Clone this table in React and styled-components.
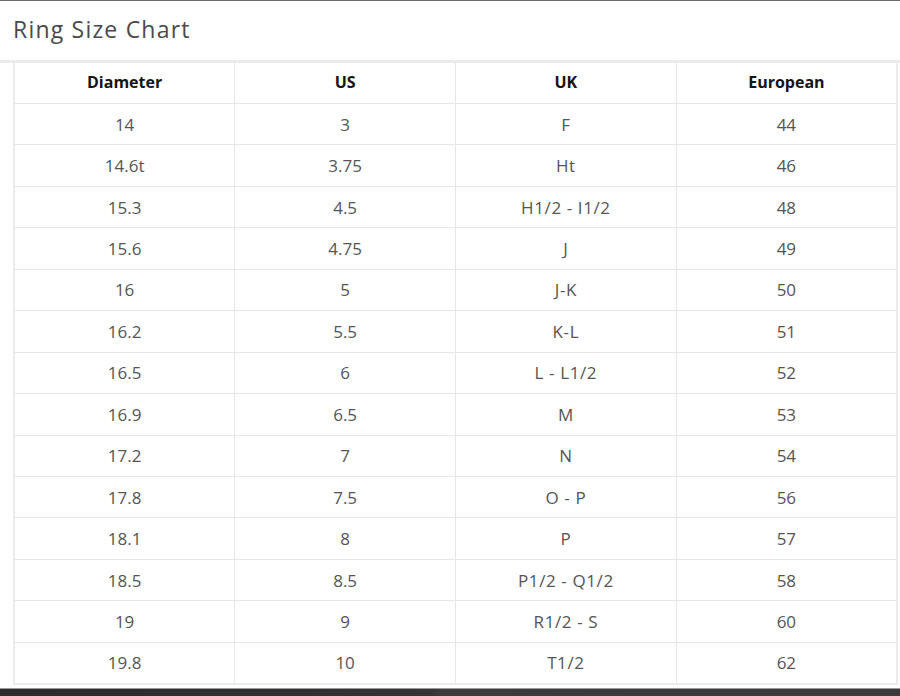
import React from "react";
import styled, { createGlobalStyle } from "styled-components";

const FONT = `"Open Sans", "Noto Sans", "Liberation Sans", sans-serif`;

const Global = createGlobalStyle`
  html, body {
    margin: 0;
    padding: 0;
    background: #ffffff;
  }
  body {
    font-family: ${FONT};
  }
`;

const Frame = styled.div`
  width: 900px;
  height: 696px;
  display: flex;
  flex-direction: column;
  overflow: hidden;
  background: #fff;
  border-top: 1px solid #6a6a6a;
  box-sizing: border-box;
`;

const Header = styled.header`
  height: 59px;
  display: flex;
  align-items: center;
  padding: 0 13px;
  border-bottom: 3px solid #ececec;
  flex-shrink: 0;
`;

const Title = styled.h2`
  margin: 0;
  font-family: ${FONT};
  font-size: 23px;
  font-weight: 400;
  color: #4a4a4a;
  letter-spacing: 1.2px;
  padding-bottom: 4px;
`;

const Body = styled.div`
  flex: 1;
  padding: 0 2px 0 13px;
`;

const Table = styled.table`
  width: 100%;
  border-collapse: collapse;
  table-layout: fixed;
  border-left: 2px solid #ebebeb;
  border-right: 2px solid #ebebeb;
  border-bottom: 2px solid #ebebeb;
`;

const Th = styled.th`
  height: 38px;
  padding: 0 0 2px;
  border: 1px solid #e6e6e6;
  border-top: none;
  font-family: ${FONT};
  font-size: 16px;
  font-weight: 700;
  color: #141414;
  text-align: center;
  vertical-align: middle;
`;

const Td = styled.td`
  height: 40.45px;
  padding: 0;
  border: 1px solid #e6e6e6;
  font-family: ${FONT};
  font-size: 17px;
  font-weight: 400;
  color: #555;
  text-align: center;
  vertical-align: middle;
  letter-spacing: ${(p) => (p.$wide ? "0.6px" : "0")};
`;

const BottomBar = styled.div`
  height: 7px;
  flex-shrink: 0;
  border-top: 1px solid #9a9a9a;
  background: linear-gradient(90deg, #2b2b2b 0%, #343434 48%, #3c3c3c 49%, #3a3a3a 100%);
`;

const columns = ["Diameter", "US", "UK", "European"];

const rows = [
  ["14", "3", "F", "44"],
  ["14.6t", "3.75", "Ht", "46"],
  ["15.3", "4.5", "H1/2 - I1/2", "48"],
  ["15.6", "4.75", "J", "49"],
  ["16", "5", "J-K", "50"],
  ["16.2", "5.5", "K-L", "51"],
  ["16.5", "6", "L - L1/2", "52"],
  ["16.9", "6.5", "M", "53"],
  ["17.2", "7", "N", "54"],
  ["17.8", "7.5", "O - P", "56"],
  ["18.1", "8", "P", "57"],
  ["18.5", "8.5", "P1/2 - Q1/2", "58"],
  ["19", "9", "R1/2 - S", "60"],
  ["19.8", "10", "T1/2", "62"],
];

export default function App() {
  return (
    <>
      <Global />
      <Frame>
        <Header>
          <Title>Ring Size Chart</Title>
        </Header>
        <Body>
          <Table>
            <thead>
              <tr>
                {columns.map((c) => (
                  <Th key={c}>{c}</Th>
                ))}
              </tr>
            </thead>
            <tbody>
              {rows.map((r, i) => (
                <tr key={i}>
                  {r.map((v, j) => (
                    <Td key={j} $wide={j === 2}>
                      {v}
                    </Td>
                  ))}
                </tr>
              ))}
            </tbody>
          </Table>
        </Body>
        <BottomBar />
      </Frame>
    </>
  );
}
